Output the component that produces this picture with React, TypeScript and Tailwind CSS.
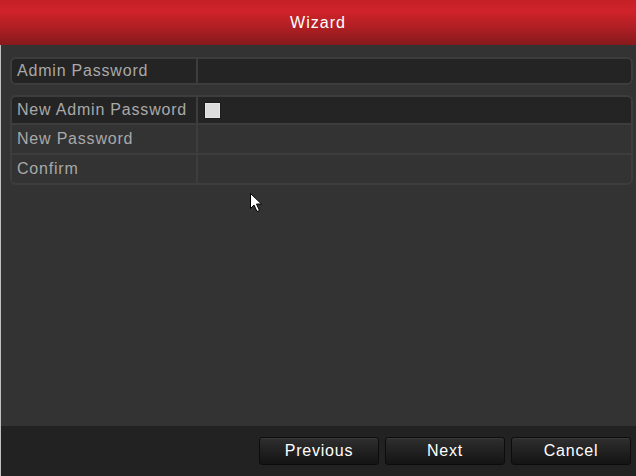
const font = { fontFamily: '"Liberation Sans", Arial, sans-serif' };

function Row({
  label,
  dark,
  height,
  last,
  children,
}: {
  label: string;
  dark?: boolean;
  height: string;
  last?: boolean;
  children?: React.ReactNode;
}) {
  return (
    <div
      className={`flex ${height} ${dark ? 'bg-[#242424]' : 'bg-[#333333]'} ${
        last ? '' : 'border-b-2 border-[#3d3d3d]'
      }`}
    >
      <div className="w-[184px] flex items-center pl-[5px] text-[16px] tracking-[0.8px] text-[#a9a9a9]">
        {label}
      </div>
      <div className="w-[2px] bg-[#3d3d3d]" />
      <div className="flex-1 flex items-center pl-[6px]">{children}</div>
    </div>
  );
}

function Button({ label }: { label: string }) {
  return (
    <button className="w-[120px] h-[28px] rounded-[3px] border border-[#0c0c0c] bg-[linear-gradient(#2f2f2f,#1e1e1e_60%,#141414)] text-white text-[16px] tracking-[0.8px] shadow-[inset_0_1px_0_#3a3a3a]">
      {label}
    </button>
  );
}

export default function App() {
  return (
    <div className="relative w-[636px] h-[476px] flex flex-col bg-[#333333] overflow-hidden" style={font}>
      <div className="h-[45px] flex items-center justify-center bg-[linear-gradient(#c62027,#cf2329_25%,#b01f24_60%,#861a1c)] text-white text-[16px] tracking-[1px]">
        Wizard
      </div>

      <div className="flex-1 flex flex-col gap-[10px] pt-[12px] pl-[9px] pr-[3px] border-l border-[#c0c0c0]">
        <div className="rounded-[6px] border-2 border-[#3d3d3d] bg-[#242424] overflow-hidden">
          <Row label="Admin Password" dark height="h-[24px]" last />
        </div>

        <div className="rounded-[6px] border-2 border-[#3d3d3d] overflow-hidden">
          <Row label="New Admin Password" dark height="h-[28px]">
            <div className="w-[17px] h-[17px] border border-[#1a1a1a] bg-[#dcdcdc] shadow-[inset_0_0_0_1px_#e6e6e6]" />
          </Row>
          <Row label="New Password" height="h-[30px]" />
          <Row label="Confirm" height="h-[28px]" last />
        </div>
      </div>

      <div className="h-[50px] flex items-center justify-end gap-[6px] pr-[5px] bg-[#222222] border-l border-[#c0c0c0]">
        <Button label="Previous" />
        <Button label="Next" />
        <Button label="Cancel" />
      </div>

      <svg className="absolute left-[250px] top-[193px]" width="13" height="20" viewBox="0 0 13 20">
        <path d="M0.5 0.5 L0.5 15.5 L4 12 L7 18.5 L9.5 17.5 L6.5 11 L11.5 11 Z" fill="#ffffff" stroke="#000000" strokeWidth="1" />
      </svg>
    </div>
  );
}
